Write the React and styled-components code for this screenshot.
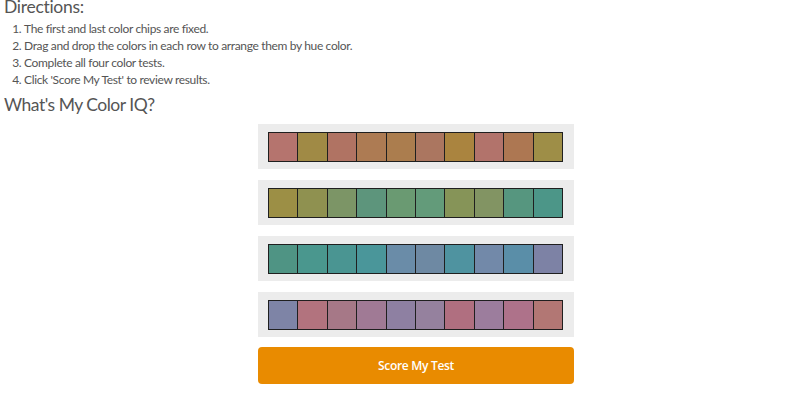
import React from 'react';
import styled, { createGlobalStyle } from 'styled-components';

const GlobalStyle = createGlobalStyle`
  html, body {
    margin: 0;
    padding: 0;
    background: #fff;
    font-family: Lato, "Liberation Sans", sans-serif;
  }
`;

const Page = styled.div`
  padding: 0 0 0 4px;
  overflow: hidden;
  height: 395px;
`;

const Heading = styled.h3`
  margin: -5px 0 0;
  font-size: 17.5px;
  font-weight: 400;
  line-height: 24px;
  letter-spacing: -0.3px;
  color: #555;
`;

const Steps = styled.ol`
  margin: 1px 0 0;
  padding-left: 20px;
  font-size: 12px;
  line-height: 17px;
  letter-spacing: -0.35px;
  color: #555;
`;

const Title = styled.h2`
  margin: 5px 0 0;
  font-size: 17.5px;
  font-weight: 400;
  line-height: 24px;
  letter-spacing: -0.5px;
  color: #555;
`;

const Board = styled.div`
  width: 316px;
  margin: 7px 0 0 254px;
  display: flex;
  flex-direction: column;
  gap: 11px;
`;

const Panel = styled.div`
  background: #ececec;
  padding: 8px 11px 7px 10px;
`;

// chips sit on a dark strip so the 1px gaps read as borders
const ChipRow = styled.div`
  display: flex;
  gap: 1px;
  padding: 1px;
  height: 28px;
  background: #1f1f1f;
`;

const Chip = styled.div`
  flex: 1;
  background: ${(p) => p.color};
`;

const ScoreButton = styled.button`
  margin-top: -1px;
  height: 37px;
  border: none;
  border-radius: 4px;
  background: #e98b00;
  color: #fff;
  font-family: "Open Sans", "Liberation Sans", sans-serif;
  font-size: 12px;
  font-weight: 600;
  letter-spacing: -0.3px;
  cursor: pointer;
`;

const rows = [
  ['#b5746e', '#a08a45', '#b07363', '#ad7b53', '#ab7d4e', '#ab7660', '#aa843f', '#b2736b', '#ad7752', '#9e8e47'],
  ['#9c8f45', '#8f9150', '#7c9566', '#5d957c', '#6a9a72', '#639b7a', '#869458', '#829463', '#56967f', '#4c9688'],
  ['#4f9484', '#4a978e', '#4a9592', '#4a969a', '#6a8ca8', '#6e89a3', '#4f93a0', '#7289a9', '#5a8ea8', '#7d82a5'],
  ['#7e84a6', '#b2737e', '#a67887', '#a07a95', '#8e80a2', '#95819e', '#b06f80', '#9c7d9d', '#ae728a', '#b27774'],
];

const App = () => (
  <Page>
    <GlobalStyle />
    <Heading>Directions:</Heading>
    <Steps>
      <li>The first and last color chips are fixed.</li>
      <li>Drag and drop the colors in each row to arrange them by hue color.</li>
      <li>Complete all four color tests.</li>
      <li>Click 'Score My Test' to review results.</li>
    </Steps>
    <Title>What's My Color IQ?</Title>
    <Board>
      {rows.map((row, i) => (
        <Panel key={i}>
          <ChipRow>
            {row.map((c, j) => (
              <Chip key={j} color={c} />
            ))}
          </ChipRow>
        </Panel>
      ))}
      <ScoreButton>Score My Test</ScoreButton>
    </Board>
  </Page>
);

export default App;
